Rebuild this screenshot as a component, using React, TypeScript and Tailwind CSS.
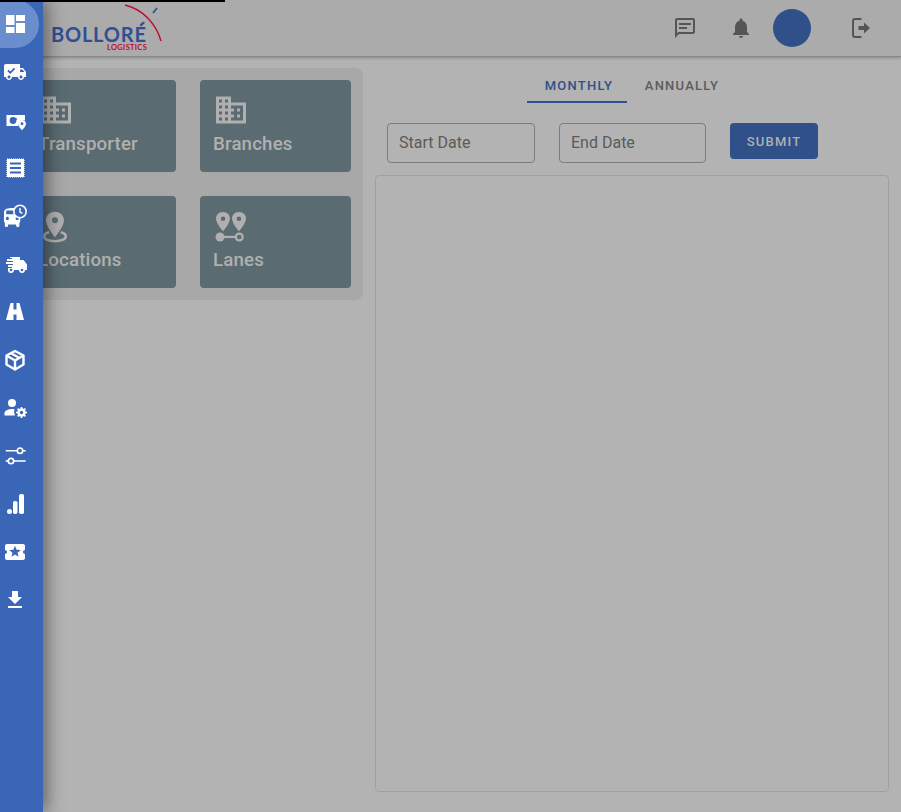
import React from 'react';

const roboto = { fontFamily: 'Roboto, sans-serif' };

const paths = {
  dashboard: 'M3 13h8.500V3H3v10zm0 8h8.500v-6H3v6zm10 0h9V11h-9v10zm0-18v6h9V3h-9z',
  truck: 'M20 8h-3V4H3c-1.100 0-2 .9-2 2v11h2c0 1.660 1.340 3 3 3s3-1.340 3-3h6c0 1.660 1.340 3 3 3s3-1.340 3-3h2v-5l-3-4zM6 18.500c-.83 0-1.500-.67-1.500-1.500s.67-1.500 1.500-1.500 1.500.67 1.500 1.500-.67 1.500-1.500 1.500zm13.500-9l1.960 2.500H17V9.500h2.500zm-1.500 9c-.83 0-1.500-.67-1.500-1.500s.67-1.500 1.500-1.500 1.500.67 1.500 1.500-.67 1.500-1.500 1.500z',
  bus: 'M3 15c0 .7.3 1.300.8 1.800V19c0 .5.4.9.9.9h1c.5 0 .9-.4.9-.9v-1h7v1c0 .5.4.9.9.9h1c.5 0 .9-.4.9-.9v-2.200c.5-.5.8-1.100.8-1.800V5H11C6.500 5 3 5.500 3 8.500V15zm3-.500c-.8 0-1.300-.600-1.300-1.300S5.200 12 6 12s1.300.500 1.300 1.200-.500 1.300-1.300 1.300zm8.500 0c-.8 0-1.300-.600-1.300-1.300s.500-1.200 1.300-1.200 1.300.500 1.300 1.200-.500 1.300-1.300 1.300zM5 10V7h10v3H5z',
  activity: 'M20 12c0-1.100.9-2 2-2V6c0-1.100-.9-2-2-2H4c-1.100 0-1.990.9-1.990 2v4c1.100 0 1.990.9 1.990 2s-.89 2-2 2v4c0 1.100.89 2 2 2h16c1.100 0 2-.9 2-2v-4c-1.100 0-2-.9-2-2zm-4.420 4.800L12 14.500l-3.580 2.300 1.080-4.120-3.290-2.690 4.240-.25L12 5.800l1.540 3.950 4.240.25-3.290 2.690 1.090 4.110z',
  download: 'M19 9h-4V3H9v6H5l7 7 7-7zM5 18v2h14v-2H5z',
  domain: 'M12 7V3H2v18h20V7H12zM6 19H4v-2h2v2zm0-4H4v-2h2v2zm0-4H4V9h2v2zm0-4H4V5h2v2zm4 12H8v-2h2v2zm0-4H8v-2h2v2zm0-4H8V9h2v2zm0-4H8V5h2v2zm10 12h-8v-2h2v-2h-2v-2h2v-2h-2V9h8v10zm-2-8h-2v2h2v-2zm0 4h-2v2h2v-2z',
  bell: 'M12 22c1.100 0 2-.9 2-2h-4c0 1.100.89 2 2 2zm6-6v-5c0-3.070-1.640-5.640-4.500-6.320V4c0-.83-.67-1.500-1.500-1.500s-1.500.67-1.500 1.500v.68C7.630 5.360 6 7.920 6 11v5l-2 2v1h16v-1l-2-2z',
};

const Svg = ({ children, className }: { children: React.ReactNode; className: string }) => (
  <svg viewBox="0 0 24 24" fill="currentColor" className={className}>
    {children}
  </svg>
);

const sideIcons: React.ReactNode[] = [
  <path d={paths.dashboard} />,
  <>
    <path d={paths.truck} />
    <path d="M5 10.500l2.300 2.300 4.200-4.400" fill="none" stroke="#3966b7" strokeWidth="1.800" />
  </>,
  <>
    <path d="M3.500 7H22v5.500a5 5 0 0 0-7 5.500H3.500z" />
    <circle cx="10" cy="12.500" r="3.400" fill="#3966b7" />
    <path d="M10.500 12.500a1.800 1.800 0 0 1 3.300-1" fill="none" stroke="#3966b7" strokeWidth="1.500" />
    <path fillRule="evenodd" d="M19 12c-2.200 0-4 1.600-4 3.700 0 2.700 4 6.300 4 6.300s4-3.600 4-6.300c0-2.100-1.800-3.700-4-3.700zm0 5.100a1.400 1.400 0 1 1 0-2.800 1.400 1.400 0 0 1 0 2.800z" />
  </>,
  <>
    <rect x="4" y="3" width="17" height="18" stroke="currentColor" strokeWidth="1.200" strokeDasharray="1 1" />
    <path d="M7 7.500h11M7 12h11M7 16.500h11" stroke="#3966b7" strokeWidth="2" />
  </>,
  <>
    <g transform="translate(-2.500 -2.500) scale(1.150 1.280)">
      <path fillRule="evenodd" d={paths.bus} />
    </g>
    <circle cx="17" cy="7.500" r="6.200" fill="#3966b7" stroke="currentColor" strokeWidth="1.600" />
    <path d="M17 4v4l2.400 1.300" fill="none" stroke="currentColor" strokeWidth="1.400" />
  </>,
  <g transform="translate(1 0)">
    <path d="M6 5h10v3h3.500l3.500 4.500V18h-2a3 3 0 0 1-6 0H10a3 3 0 0 1-6 0V16h4v-1H4v-2h5v-1H2v-2h7V9H3V7h5V6H6z" />
    <circle cx="7" cy="18" r="1.300" fill="#3966b7" />
    <circle cx="18" cy="18" r="1.300" fill="#3966b7" />
  </g>,
  <path d="M7.500 3h3v6.500h3V3h3l4.500 17h-7.500v-5.500h-3V20H3z" />,
  <g fill="none" stroke="currentColor" strokeWidth="2.400" strokeLinejoin="round">
    <path d="M12 3l8.500 4.500v9L12 21.500l-8.500-5v-9z" />
    <path d="M3.500 7.500l8.500 5 8.500-5M12 12.500v9M8 5.200l8.500 4.800" />
  </g>,
  <>
    <circle cx="9" cy="7" r="4" />
    <path d="M1.500 19.500v-2.500c0-2.700 5-4 7.500-4 .8 0 1.600.1 2.500.3a7 7 0 0 0 .5 6.200z" />
    <path d="M18.500 11v11M13 16.500h11M14.600 12.600l7.800 7.800M22.400 12.600l-7.800 7.800" stroke="currentColor" strokeWidth="1.600" />
    <circle cx="18.500" cy="16.500" r="4.200" />
    <circle cx="18.500" cy="16.500" r="1.700" fill="#3966b7" />
  </>,
  <>
    <path d="M2.700 6.700h11.300M20 6.700h2.700M2.700 17h2.300M11 17h11.700" fill="none" stroke="currentColor" strokeWidth="1.500" />
    <circle cx="17" cy="6.700" r="2.700" fill="none" stroke="currentColor" strokeWidth="1.700" />
    <circle cx="8" cy="17" r="2.700" fill="none" stroke="currentColor" strokeWidth="1.700" />
  </>,
  <>
    <circle cx="6.500" cy="19.500" r="2.500" />
    <rect x="10" y="9" width="4.500" height="13" rx="1.800" />
    <rect x="16" y="2" width="5" height="20" rx="1.800" />
  </>,
  <path d={paths.activity} />,
  <path d={paths.download} />,
];

const Tile = ({ label, icon }: { label: string; icon: React.ReactNode }) => (
  <div className="h-[92px] rounded-[4px] bg-[#5a6b72] pl-[13px] pt-[12px] text-[#b0b0b0]">
    <Svg className="size-9">{icon}</Svg>
    <div className="mt-[5px] text-[18.720px] leading-[22px] font-medium tracking-[0.15px]">{label}</div>
  </div>
);

const DateField = ({ label, className }: { label: string; className: string }) => (
  <div className={`flex h-10 items-center rounded-[4px] border border-[#7c7c7c] pl-[11px] text-[16px] text-[#5a5a5a] ${className}`}>
    {label}
  </div>
);

export default function App() {
  return (
    <div className="relative h-[812px] overflow-hidden bg-[#b3b3b3]" style={roboto}>
      <div className="absolute top-0 left-0 z-30 h-[2px] w-[225px] bg-black" />

      {/* sidebar sits over the page */}
      <aside className="absolute top-0 left-0 z-20 h-full w-[43px] bg-[#3966b7] shadow-[3px_0_18px_rgba(0,0,0,0.5)]">
        {sideIcons.map((icon, i) => (
          <div
            key={i}
            className={`flex h-12 w-[39px] items-center pl-[3px] text-white ${i === 0 ? 'rounded-r-[24px] bg-[#6a8ecd]' : ''}`}
          >
            <Svg className="size-6">{icon}</Svg>
          </div>
        ))}
      </aside>

      <header className="flex h-[57px] items-center border-b border-[#8a8a8a] bg-[#ababab] pr-[28px] pl-[51px] shadow-[0_1px_3px_rgba(0,0,0,0.25)]">
        <div className="relative h-[56px] w-[112px]">
          <div className="pt-[24px] text-[20px] leading-[20px] font-bold tracking-[0.8px] text-[#314f93]" style={{ fontFamily: 'Lato, sans-serif' }}>
            BOLLORÉ
          </div>
          <div className="absolute top-[45px] left-[56px] text-[7.500px] leading-[6px] font-bold tracking-[0.3px] text-[#b5122f]" style={{ fontFamily: 'Lato, sans-serif' }}>
            LOGISTICS
          </div>
          <svg viewBox="0 0 112 56" className="absolute inset-0 size-full">
            <path d="M74 5C91 9 105 23 110 41" fill="none" stroke="#b5122f" strokeWidth="1.500" />
            <path d="M102 13l4-5" stroke="#314f93" strokeWidth="1.800" />
            <path d="M90 26l3-4" stroke="#314f93" strokeWidth="1.500" />
          </svg>
        </div>
        <div className="ml-auto flex items-center text-[#555]">
          <svg viewBox="0 0 24 24" className="size-6" fill="currentColor">
            <path d="M20 2H4c-1.100 0-1.990.9-1.990 2L2 22l4-4h14c1.100 0 2-.9 2-2V4c0-1.100-.9-2-2-2zm0 14H5.170L4 17.170V4h16v12z" />
            <path d="M6 11h8v2H6zm0-4h12v2H6z" />
          </svg>
          <Svg className="ml-8 size-6">
            <path d={paths.bell} />
          </Svg>
          <div className="ml-5 size-[38px] rounded-full bg-[#2f5088]" />
          <svg viewBox="0 0 24 24" className="ml-[38px] size-6" fill="none" stroke="currentColor" strokeWidth="2">
            <path d="M12.500 3H6a2 2 0 0 0-2 2v14a2 2 0 0 0 2 2h6.500" />
            <path d="M9.500 10H15V6.500l6 5.500-6 5.500V14H9.500z" fill="currentColor" stroke="none" />
          </svg>
        </div>
      </header>

      <main className="flex items-start gap-3 pt-[11px] pr-3 pl-[13px]">
        <section className="grid h-[232px] w-[350px] shrink-0 grid-cols-2 content-start gap-x-6 gap-y-6 rounded-[8px] bg-[#a8a8a8] p-3">
          <Tile label="Transporter" icon={<path d={paths.domain} />} />
          <Tile label="Branches" icon={<path d={paths.domain} />} />
          <Tile
            label="Locations"
            icon={
              <>
                <path fillRule="evenodd" d="M11.300 2.500C7.800 2.500 5.300 5 5.300 8.200c0 4.200 6 11.300 6 11.300s6-7.100 6-11.300c0-3.200-2.500-5.700-6-5.700zm0 7.700a2 2 0 1 1 0-4 2 2 0 0 1 0 4z" />
                <path d="M7.500 16.200c-2.300.5-3.400 1.500-3.400 2.800 0 1.900 3.200 3.100 7.200 3.100s7.200-1.200 7.200-3.100c0-1.300-1.100-2.300-3.400-2.800" fill="none" stroke="currentColor" strokeWidth="1.700" />
              </>
            }
          />
          <Tile
            label="Lanes"
            icon={
              <>
                <path fillRule="evenodd" d="M6.700 2.700c-2.700 0-4.700 1.900-4.700 4.300 0 3.200 4.700 8.500 4.700 8.500s4.600-5.300 4.600-8.500c0-2.400-2-4.300-4.600-4.300zm0 5.900a1.500 1.500 0 1 1 0-3 1.500 1.500 0 0 1 0 3z" />
                <path fillRule="evenodd" d="M17.300 2.700c-2.600 0-4.600 1.900-4.600 4.300 0 3.200 4.600 8.500 4.600 8.500S22 10.200 22 7c0-2.400-2-4.300-4.700-4.300zm0 5.900a1.500 1.500 0 1 1 0-3 1.500 1.500 0 0 1 0 3z" />
                <circle cx="4.700" cy="19.300" r="3" />
                <circle cx="17.500" cy="19.300" r="2.300" fill="none" stroke="currentColor" strokeWidth="1.500" />
                <path d="M7 19.300h8.500" stroke="currentColor" strokeWidth="1.500" />
              </>
            }
          />
        </section>

        <section className="flex h-[724px] flex-1 flex-col">
          <div className="flex justify-center text-[13px] leading-[35px] font-medium tracking-[1.250px]">
            <div className="h-[35px] w-[100px] border-b-2 border-[#2f5088] pl-[4px] text-center text-[#2f5088]">MONTHLY</div>
            <div className="h-[35px] w-[110px] text-center text-[#5c5c5c]">ANNUALLY</div>
          </div>
          <div className="mt-5 flex items-start pl-3">
            <DateField label="Start Date" className="w-[148px]" />
            <DateField label="End Date" className="ml-6 w-[147px]" />
            <button className="ml-6 h-9 w-[88px] rounded-[4px] bg-[#2f5088] pt-[1px] text-[13px] font-medium tracking-[1.200px] text-[#b0b0b0]">
              SUBMIT
            </button>
          </div>
          <div className="mt-3 flex-1 rounded-[4px] border border-[#a0a0a0]" />
        </section>
      </main>
    </div>
  );
}
